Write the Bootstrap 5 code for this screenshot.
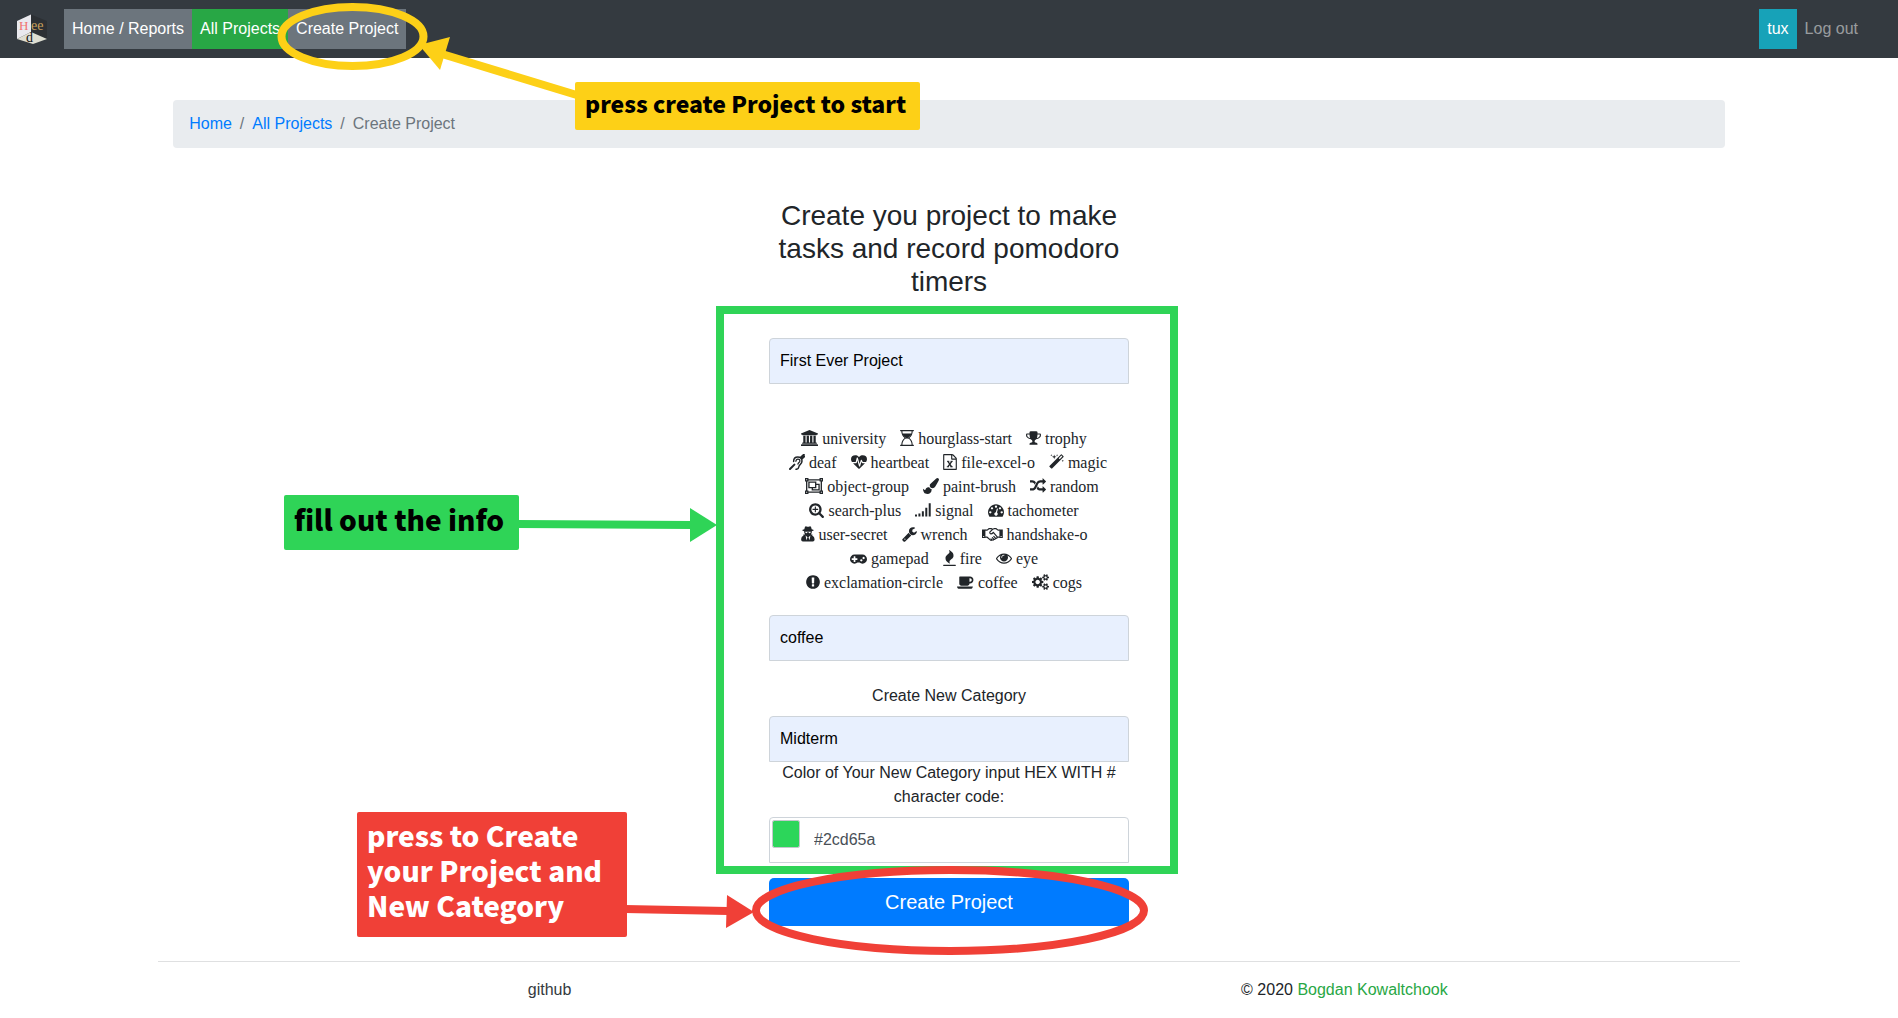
<!DOCTYPE html>
<html lang="en">
<head>
<meta charset="utf-8">
<meta name="viewport" content="width=device-width, initial-scale=1">
<title>Create Project</title>
<link href="https://cdn.jsdelivr.net/npm/bootstrap@5.3.0/dist/css/bootstrap.min.css" rel="stylesheet">
<style>
  body { font-family: "Liberation Sans", Arial, sans-serif; font-size: 16px; line-height: 24px; color: #212529; background: #fff; }
  a { text-decoration: none; }
  .topbar { background: #343a40; padding: 9px 16px; }
  .topbar .nav-link { color: #fff; padding: 8px; }
  .bg-slate { background: #6c757d; }
  .bg-leaf { background: #28a745; }
  .bg-teal { background: #17a2b8; }
  .topbar .link-muted { color: rgba(255,255,255,.5); }
  .logo { width: 32px; height: 32px; }
  .page-col { padding: 0 15px; }
  .crumbs { background: #e9ecef; border-radius: 4px; padding: 12px 16px; margin: 42px 0 51px; --bs-breadcrumb-divider-color: #6c757d; --bs-breadcrumb-item-active-color: #6c757d; }
  .crumbs a { color: #007bff; }
  .project-form { max-width: 360px; }
  .form-title { font-size: 28px; line-height: 33px; font-weight: 400; margin-bottom: 40px; }
  .field { height: 46px; padding: 10px; border: 1px solid #ced4da; border-radius: 4px 4px 0 0; color: #495057; }
  .field.filled, .field.filled:focus { background: #e8f0fe; color: #000; }
  .field-color { padding-left: 44px; }
  .swatch { width: 28px; height: 28px; top: 3px; left: 3px; padding: 0; border: 1px solid #c4c8cc; border-radius: 2px; background: none; }
  .swatch::-webkit-color-swatch-wrapper { padding: 0; }
  .swatch::-webkit-color-swatch { border: 0; border-radius: 1px; }
  .icon-names { font-family: "Liberation Serif", "Times New Roman", serif; margin: 43px 0 20px; white-space: nowrap; }
  .icon-names span { margin-right: 10px; }
  .icon-names svg { height: 16px; vertical-align: -2px; fill: currentColor; overflow: visible; }
  .cat-label { margin: 23px 0 8px; }
  .color-label { margin: -1px 0 8px; }
  .btn-create { background: #007bff; color: #fff; font-size: 20px; line-height: 30px; height: 48px; margin-top: 15px; border-radius: 5px; border: 0; }
  .btn-create:hover { background: #0069d9; color: #fff; }
  .foot-rule { border-top: 1px solid #dfe0e1; margin-top: 35px; padding-top: 16px; }
  .foot-link { color: #343a40; padding-right: 8px; }
  .foot-author { color: #28a745; }
  .marks { top: 0; left: 0; width: 100%; height: 100%; overflow: visible; pointer-events: none; z-index: 5; }
  .callout-note { font-family: "Noto Sans CJK SC", "Noto Sans", sans-serif; font-weight: 900; border-radius: 2px; padding: 0 10px; z-index: 6; white-space: nowrap; }
  .note-start { left: 575px; top: 82px; width: 345px; height: 48px; background: #fdd017; color: #000; font-size: 23px; line-height: 42px; }
  .note-info { left: -485px; top: 296px; width: 235px; height: 55px; background: #2fd457; color: #000; font-size: 28px; line-height: 48px; }
  .note-press { left: -412px; top: 613px; width: 270px; height: 125px; background: #f04037; color: #fff; font-size: 28px; line-height: 35px; padding-top: 6px; }
</style>
<script src="https://cdn.jsdelivr.net/npm/bootstrap@5.3.0/dist/js/bootstrap.bundle.min.js"></script>
</head>
<body class="position-relative">

<svg class="d-none" xmlns="http://www.w3.org/2000/svg">
  <symbol id="i-university" viewBox="0 0 1920 1792"><path d="M960 0l960 384v128h-128q0 26-20.500 45t-48.500 19h-1526q-28 0-48.500-19t-20.500-45h-128v-128zm-704 640h256v768h128v-768h256v768h128v-768h256v768h128v-768h256v768h59q28 0 48.500 19t20.500 45v64h-1664v-64q0-26 20.500-45t48.500-19h59v-768zm1595 960q28 0 48.500 19t20.500 45v128h-1920v-128q0-26 20.500-45t48.500-19h1782z"/></symbol>
  <symbol id="i-hourglass" viewBox="0 0 1536 1792"><path d="M1408 128q0 261-106.500 461.500t-266.500 306.500q160 106 266.500 306.500t106.500 461.500h96q14 0 23 9t9 23v64q0 14-9 23t-23 9h-1472q-14 0-23-9t-9-23v-64q0-14 9-23t23-9h96q0-261 106.500-461.500t266.500-306.500q-160-106-266.500-306.500t-106.500-461.500h-96q-14 0-23-9t-9-23v-64q0-14 9-23t23-9h1472q14 0 23 9t9 23v64q0 14-9 23t-23 9h-96zm-534 708q77-29 149-92.500t129.500-152.500 92.500-210 35-253h-1024q0 132 35 253t92.500 210 129.500 152.500 149 92.500q19 7 30.500 23.500t11.500 36.500-11.500 36.500-30.500 23.500q-77 29-149 92.500t-129.500 152.500-92.500 210-35 253h1024q0-132-35-253t-92.500-210-129.500-152.500-149-92.500q-19-7-30.500-23.500t-11.500-36.500 11.500-36.500 30.500-23.500z"/><path d="M260 400h1016q-90 380-400 450v100h-216v-100q-310-70-400-450z"/></symbol>
  <symbol id="i-trophy" viewBox="64 0 1664 1792"><path d="M521 883q-73-160-73-371h-256v96q0 78 94.500 162t234.500 113zm1079-275v-96h-256q0 211-73 371 140-29 234.500-113t94.500-162zm128-128v128q0 71-41.500 143t-112 130-173 97.500-215.500 44.500q-42 54-95 95-38 34-52.500 72.500t-14.500 89.500q0 54 30.500 91t97.500 37q75 0 133.500 45.500t58.500 114.500v64q0 14-9 23t-23 9h-832q-14 0-23-9t-9-23v-64q0-69 58.500-114.500t133.500-45.500q67 0 97.500-37t30.500-91q0-51-14.500-89.500t-52.500-72.500q-53-41-95-95-113-5-215.500-44.500t-173-97.500-112-130-41.500-143v-128q0-40 28-68t68-28h288v-96q0-66 47-113t113-47h576q66 0 113 47t47 113v96h288q40 0 68 28t28 68z"/></symbol>
  <symbol id="i-deaf" viewBox="0 0 16 16"><g fill="none" stroke="currentColor" stroke-linecap="round" stroke-width="1.500"><path d="M4.600 7.400C4.600 4.600 6.400 3 8.800 3s4.200 1.700 4.200 4c0 3.200-3 3.600-3.200 6-.2 1.500-1.100 2.300-2.800 2.300"/><path stroke-width="1.200" d="M6.900 7.300c.1-1.400 1-2.100 2-2.100 1.300 0 2 .8 2 1.800 0 1.400-1.800 1.600-2 3.100"/><path stroke-width="2" d="M1 15l4.400-4.400M11.800 3.600l3-2.800M13 4.400l2.200-2"/></g></symbol>
  <symbol id="i-heartbeat" viewBox="0 0 1792 1792"><path d="M1280 1024h305q-5 6-10 10.500t-9 7.500l-3 4-623 600q-18 18-44 18t-44-18l-624-602q-5-2-21-20h369q22 0 39.500-13.500t22.500-34.500l70-281 190 667q6 20 23 33t39 13q21 0 38-13t23-33l146-485 56 112q18 35 57 35zm512-428q0 145-103 300h-369l-111-221q-8-17-25.500-27t-36.500-8q-45 5-56 46l-129 430-196-686q-6-20-23.500-33t-39.500-13-39 13.500-22 34.500l-116 464h-423q-103-155-103-300 0-220 127-344t351-124q62 0 126.500 21.500t120 58 95.500 68.500 76 68q36-36 76-68t95.500-68.500 120-58 126.500-21.500q224 0 351 124t127 344z"/></symbol>
  <symbol id="i-excel" viewBox="128 0 1536 1792"><path d="M1596 380q28 28 48 76t20 88v1152q0 40-28 68t-68 28h-1344q-40 0-68-28t-28-68v-1600q0-40 28-68t68-28h896q40 0 88 20t76 48zm-444-244v376h376q-10-29-22-41l-313-313q-12-12-41-22zm384 1528v-1024h-416q-40 0-68-28t-28-68v-416h-768v1536h1280z"/><path fill="none" stroke="currentColor" stroke-width="110" d="M560 820h260M960 820h240M540 1430h230M920 1430h280"/><path fill="none" stroke="currentColor" stroke-width="150" d="M660 830l420 600M1100 830l-440 600"/></symbol>
  <symbol id="i-magic" viewBox="64 0 1664 1792"><path d="M1254 581l293-293-107-107-293 293zm447-293q0 27-18 45l-1286 1286q-18 18-45 18t-45-18l-198-198q-18-18-18-45t18-45l1286-1286q18-18 45-18t45 18l198 198q18 18 18 45zm-1351-190l98 30-98 30-30 98-30-98-98-30 98-30 30-98zm350 162l196 60-196 60-60 196-60-196-196-60 196-60 60-196zm930 478l98 30-98 30-30 98-30-98-98-30 98-30 30-98zm-640-640l98 30-98 30-30 98-30-98-98-30 98-30 30-98z"/></symbol>
  <symbol id="i-group" viewBox="0 0 2048 1792"><g fill="none" stroke="currentColor" stroke-width="150"><path d="M384 192h1280M384 1600h1280M192 384v1024M1856 384v1024M64 64h256v256h-256zM1728 64h256v256h-256zM64 1472h256v256h-256zM1728 1472h256v256h-256z"/><path d="M448 448h768v640h-768zM1216 704h384v640h-768v-256"/></g></symbol>
  <symbol id="i-brush" viewBox="0 0 1792 1792"><path d="M1615 0q70 0 122.500 46.500t52.500 116.500q0 63-45 151-332 629-465 752-97 91-218 91-126 0-216.500-92.500t-90.500-219.500q0-128 92-212l638-579q59-54 130-54zm-909 1034q39 76 106.500 130t150.500 76l1 71q4 213-129.500 347t-348.500 134q-123 0-218-46.500t-152.500-127.500-86.500-183-29-220q7 5 41 30t62 44.500 59 36.500 46 17q41 0 55-37 25-66 57.500-112.500t69.500-76 88-47.500 103-25.500 125-10.500z"/></symbol>
  <symbol id="i-random" viewBox="0 0 1792 1792"><path d="M666 481q-60 92-137 273-22-45-37-72.500t-40.500-63.500-51-56.500-63-35-81.500-14.500h-224q-14 0-23-9t-9-23v-192q0-14 9-23t23-9h224q250 0 410 225zm1126 799q0 14-9 23l-320 320q-9 9-23 9-13 0-22.500-9.500t-9.500-22.500v-192q-32 0-85 .5t-81 1-73-1-71-5-64-10.500-63-18.500-58-28.500-59-40-55-53.500-56-69.500q59-93 136-273 22 45 37 72.500t40.500 63.500 51 56.500 63 35 81.500 14.500h256v-192q0-14 9-23t23-9q12 0 24 10l319 319q9 9 9 23zm0-896q0 14-9 23l-320 320q-9 9-23 9-13 0-22.500-9.500t-9.500-22.500v-192h-256q-48 0-87 15t-69 45-51 61.500-45 77.500q-32 62-78 171-29 66-49.500 111t-54 105-64 100-74 83-90 68.500-106.500 42-128 16.500h-224q-14 0-23-9t-9-23v-192q0-14 9-23t23-9h224q48 0 87-15t69-45 51-61.500 45-77.500q32-62 78-171 29-66 49.500-111t54-105 64-100 74-83 90-68.500 106.500-42 128-16.500h256v-192q0-14 9-23t23-9q12 0 24 10l319 319q9 9 9 23z"/></symbol>
  <symbol id="i-searchplus" viewBox="64 0 1664 1792"><path d="M1088 800v64q0 13-9.500 22.500t-22.500 9.500h-224v224q0 13-9.500 22.500t-22.500 9.500h-64q-13 0-22.500-9.500t-9.500-22.500v-224h-224q-13 0-22.500-9.500t-9.500-22.500v-64q0-13 9.500-22.500t22.500-9.500h224v-224q0-13 9.500-22.500t22.500-9.500h64q13 0 22.500 9.500t9.500 22.500v224h224q13 0 22.500 9.500t9.500 22.500zm128 32q0-185-131.500-316.500t-316.500-131.500-316.500 131.500-131.500 316.500 131.500 316.500 316.500 131.500 316.500-131.500 131.500-316.500zm512 832q0 53-37.500 90.500t-90.500 37.500q-54 0-90-38l-343-342q-179 124-399 124-143 0-273.500-55.500t-225-150-150-225-55.500-273.500 55.500-273.500 150-225 225-150 273.500-55.500 273.500 55.500 225 150 150 225 55.500 273.500q0 220-124 399l343 343q37 37 37 90z"/></symbol>
  <symbol id="i-signal" viewBox="0 0 1792 1792"><path d="M0 1408h224v224h-224zM384 1280h224v352h-224zM768 1024h224v608h-224zM1152 640h224v992h-224zM1536 128h224v1504h-224z"/></symbol>
  <symbol id="i-tachometer" viewBox="0 0 1792 1792"><path d="M384 1152q0-53-37.500-90.500t-90.500-37.500-90.500 37.500-37.500 90.500 37.500 90.500 90.500 37.500 90.500-37.500 37.500-90.500zm192-448q0-53-37.500-90.500t-90.500-37.500-90.500 37.500-37.500 90.500 37.500 90.500 90.500 37.500 90.500-37.500 37.500-90.500zm428 481l101-382q6-26-7.500-48.500t-38.500-29.500-48 6.500-30 39.500l-101 382q-60 5-107 43.500t-63 98.500q-20 77 20 146t117 89 146-20 89-117q16-60-6-117t-72-91zm660-33q0-53-37.500-90.500t-90.500-37.500-90.500 37.500-37.500 90.500 37.500 90.500 90.500 37.500 90.500-37.500 37.500-90.500zm-640-640q0-53-37.500-90.500t-90.500-37.500-90.500 37.500-37.500 90.500 37.500 90.500 90.500 37.500 90.500-37.500 37.500-90.500zm448 192q0-53-37.500-90.500t-90.500-37.500-90.500 37.500-37.500 90.500 37.500 90.500 90.500 37.500 90.500-37.500 37.500-90.500zm320 448q0 261-141 483-19 29-54 29h-1402q-35 0-54-29-141-221-141-483 0-182 71-348t191-286 286-191 348-71 348 71 286 191 191 286 71 348z"/></symbol>
  <symbol id="i-secret" viewBox="0 0 14 16"><path fill-rule="evenodd" d="M4 .8Q4.700 0 5.500.4Q7 1 8.500.4Q9.300 0 10 .8L10.700 3.200Q12.800 3.700 12.800 4.300Q12.600 5 10.800 5.300Q11 6.500 10.300 7.700L10 8.400H11.500L11.200 9.400Q13.600 10.400 13.600 13.200Q13.600 15.400 11.800 15.400H1.900Q.1 15.400.1 13.200Q.1 10.400 2.500 9.400L2.300 8.400H4L3.700 7.700Q3 6.500 3.200 5.300Q1.400 5 1.200 4.300Q1.200 3.700 3.300 3.200ZM4.200 5.800Q4.300 7.300 5.400 7.200Q6.400 7 6.600 6.100H7.400Q7.600 7 8.600 7.200Q9.700 7.300 9.800 5.800ZM4.600 9.600L5.500 14.200L6.500 11.200ZM9.400 9.600L7.500 11.200L8.500 14.200Z"/></symbol>
  <symbol id="i-wrench" viewBox="64 0 1664 1792"><path d="M448 1472q0-26-19-45t-45-19-45 19-19 45 19 45 45 19 45-19 19-45zm644-420l-682 682q-37 37-90 37-52 0-91-37l-106-108q-38-36-38-90 0-53 38-91l681-681q39 98 114.500 173.500t173.500 114.500zm634-435q0 39-23 106-47 134-164.500 217.500t-258.500 83.500q-185 0-316.500-131.500t-131.500-316.500 131.500-316.500 316.500-131.500q58 0 121.500 16.500t107.500 46.500q16 11 16 28t-16 28l-293 169v224l193 107q5-3 79-48.500t135.500-81 70.500-35.500q15 0 23.500 10t8.500 25z"/></symbol>
  <symbol id="i-handshake" viewBox="0 0 21 16"><path d="M0 3.500h3.400v8.600H0zM17.400 3.500h3.400v8.600h-3.400z"/><g fill="none" stroke="currentColor" stroke-width="1.200" stroke-linejoin="round" stroke-linecap="round"><path d="M3.400 4.100H5.200L6.900 2.700H9.500L10.600 3.300L12 2.700H14.200L16 4.100H17.400M3.400 11.200H5.200L8.200 13.900Q9.200 14.700 10 13.800Q11.200 14.600 11.900 13.300Q13.200 13.700 13.600 12.400Q15.200 12.600 15.400 11.200H17.400M10.600 3.300L7.800 6.200Q7.500 7.600 8.800 7.900Q10 8 11.300 6.300L15.400 11.200M10 13.800L9 12.800M11.900 13.300L10.400 11.600M13.600 12.400L11.800 10.400"/></g><path fill="#fff" d="M1.200 10.100h1v1h-1zM18.600 10.100h1v1h-1z"/></symbol>
  <symbol id="i-gamepad" viewBox="0 0 1920 1792"><path d="M832 1088v-128q0-14-9-23t-23-9h-192v-192q0-14-9-23t-23-9h-128q-14 0-23 9t-9 23v192h-192q-14 0-23 9t-9 23v128q0 14 9 23t23 9h192v192q0 14 9 23t23 9h128q14 0 23-9t9-23v-192h192q14 0 23-9t9-23zm576 64q0-53-37.500-90.500t-90.500-37.500-90.500 37.500-37.500 90.500 37.500 90.500 90.500 37.500 90.500-37.500 37.500-90.500zm256-256q0-53-37.500-90.500t-90.500-37.500-90.500 37.500-37.500 90.500 37.500 90.500 90.500 37.500 90.500-37.500 37.500-90.500zm256 128q0 212-150 362t-362 150q-192 0-338-128h-220q-146 128-338 128-212 0-362-150t-150-362 150-362 362-150h896q212 0 362 150t150 362z"/></symbol>
  <symbol id="i-fire" viewBox="192 0 1408 1792"><path d="M1600 1696v64q0 13-9.500 22.500t-22.500 9.500h-1344q-13 0-22.500-9.500t-9.500-22.500v-64q0-13 9.500-22.500t22.500-9.500h1344q13 0 22.500 9.500t9.500 22.500zm-256-1056q0 78-24.500 144t-64 112.500-87.500 88-96 77.500-87.500 72-64 81.500-24.500 96.500q0 96 67 224l-4-1 1 1q-90-41-160-83t-138.500-100-113.500-122.500-72.500-150.500-27.500-184q0-78 24.500-144t64-112.500 87.500-88 96-77.500 87.500-72 64-81.500 24.500-96.500q0-94-66-224l3 1-1-1q90 41 160 83t138.500 100 113.500 122.500 72.500 150.500 27.500 184z"/></symbol>
  <symbol id="i-eye" viewBox="0 0 1792 1792"><path d="M1664 960q-152-236-381-353 61 104 61 225 0 185-131.500 316.500t-316.500 131.500-316.500-131.500-131.500-316.500q0-121 61-225-229 117-381 353 133 205 333.500 326.500t434.500 121.500 434.500-121.500 333.500-326.500zm-720-384q0-20-14-34t-34-14q-125 0-214.500 89.500t-89.500 214.500q0 20 14 34t34 14 34-14 14-34q0-86 61-147t147-61q20 0 34-14t14-34zm848 384q0 34-20 69-140 230-376.500 368.500t-499.500 138.500-499.500-139-376.500-368q-20-35-20-69t20-69q140-229 376.500-368t499.500-139 499.500 139 376.500 368q20 35 20 69z"/></symbol>
  <symbol id="i-exclaim" viewBox="128 0 1536 1792"><path d="M896 128q209 0 385.500 103t279.500 279.500 103 385.500-103 385.500-279.500 279.500-385.500 103-385.500-103-279.500-279.500-103-385.500 103-385.500 279.500-279.500 385.500-103zm128 1247v-190q0-14-9-23.500t-22-9.500h-192q-13 0-23 10t-10 23v190q0 13 10 23t23 10h192q13 0 22-9.500t9-23.500zm-2-344l18-621q0-12-10-18-10-8-24-8h-220q-14 0-24 8-10 6-10 18l17 621q0 10 10 17.500t24 7.500h185q14 0 23.500-7.500t10.500-17.500z"/></symbol>
  <symbol id="i-coffee" viewBox="0 128 1920 1792"><path d="M1664 800q0-80-56-136t-136-56h-64v384h64q80 0 136-56t56-136zm-1664 736h1792q0 106-75 181t-181 75h-1280q-106 0-181-75t-75-181zm1856-736q0 159-112.500 271.500t-271.500 112.500h-64v32q0 92-66 158t-158 66h-704q-92 0-158-66t-66-158v-736q0-26 19-45t45-19h1152q159 0 271.500 112.500t112.500 271.500z"/></symbol>
  <symbol id="i-cogs" viewBox="0 0 1920 1792"><path d="M896 896q0-106-75-181t-181-75-181 75-75 181 75 181 181 75 181-75 75-181zm768 512q0-52-38-90t-90-38-90 38-38 90q0 53 37.500 90.500t90.500 37.500 90.500-37.500 37.500-90.500zm0-1024q0-52-38-90t-90-38-90 38-38 90q0 53 37.500 90.500t90.500 37.500 90.500-37.500 37.500-90.500zm-384 421v185q0 10-7 19.500t-16 10.500l-155 24q-11 35-32 76 34 48 90 115 7 11 7 20 0 12-7 19-23 30-82.500 89.500t-78.500 59.500q-11 0-21-7l-115-90q-37 19-77 31-11 108-23 155-7 24-30 24h-186q-11 0-20-7.500t-10-17.500l-23-153q-34-10-75-31l-118 89q-7 7-20 7-11 0-21-8-144-133-144-160 0-9 7-19 10-14 41-53t47-61q-23-44-35-82l-152-24q-10-1-17-9.500t-7-19.500v-185q0-10 7-19.500t16-10.500l155-24q11-35 32-76-34-48-90-115-7-11-7-20 0-12 7-20 22-30 82-89t79-59q11 0 21 7l115 90q34-18 77-32 11-108 23-154 7-24 30-24h186q11 0 20 7.500t10 17.500l23 153q34 10 75 31l118-89q8-7 20-7 11 0 21 8 144 133 144 160 0 8-7 19-12 16-42 54t-45 60q23 48 34 82l152 23q10 2 17 10.500t7 19.500zm640 533v140q0 16-149 31-12 27-30 52 51 113 51 138 0 4-4 7-122 71-124 71-8 0-46-47t-52-68q-20 2-30 2t-30-2q-14 21-52 68t-46 47q-2 0-124-71-4-3-4-7 0-25 51-138-18-25-30-52-149-15-149-31v-140q0-16 149-31 13-29 30-52-51-113-51-138 0-4 4-7 4-2 35-20t59-34 30-16q8 0 46 46.500t52 67.500q20-2 30-2t30 2q51-71 92-112l6-2q4 0 124 70 4 3 4 7 0 25-51 138 17 23 30 52 149 15 149 31zm0-1024v140q0 16-149 31-12 27-30 52 51 113 51 138 0 4-4 7-122 71-124 71-8 0-46-47t-52-68q-20 2-30 2t-30-2q-14 21-52 68t-46 47q-2 0-124-71-4-3-4-7 0-25 51-138-18-25-30-52-149-15-149-31v-140q0-16 149-31 13-29 30-52-51-113-51-138 0-4 4-7 4-2 35-20t59-34 30-16q8 0 46 46.500t52 67.500q20-2 30-2t30 2q51-71 92-112l6-2q4 0 124 70 4 3 4 7 0 25-51 138 17 23 30 52 149 15 149 31z"/></symbol>
</svg>

<nav class="topbar d-flex align-items-center">
  <a class="d-flex me-3" href="#" aria-label="Heed">
    <svg class="logo" viewBox="0 0 32 32">
      <path fill="#e9e9ee" d="M1 8L15 1.500V19L1 26z"/>
      <path fill="#2c3034" d="M15 1.500L31 8V26L15 19z"/>
      <path fill="#deded2" d="M1 26L15 19L31 26L17 31z"/>
      <g font-family="Liberation Serif, serif">
        <text x="3" y="17" font-size="13" fill="#f0716f">H</text>
        <text x="15" y="17" font-size="14" fill="#c9a05c">ee</text>
        <text x="10" y="29" font-size="14" fill="#111">d</text>
      </g>
    </svg>
  </a>
  <div class="nav flex-grow-1">
    <a class="nav-link bg-slate" href="#">Home / Reports</a>
    <a class="nav-link bg-leaf" href="#">All Projects</a>
    <a class="nav-link bg-slate" href="#">Create Project</a>
  </div>
  <div class="nav me-3">
    <a class="nav-link bg-teal" href="#">tux</a>
    <a class="nav-link link-muted" href="#">Log out</a>
  </div>
</nav>

<svg class="marks position-absolute">
  <ellipse cx="352.500" cy="36.500" rx="71" ry="29.500" fill="none" stroke="#fdd017" stroke-width="8"/>
  <path d="M442 54L580 96" stroke="#fdd017" stroke-width="8"/>
  <path d="M419 45L450 37L440 70z" fill="#fdd017"/>
</svg>
<div class="callout-note note-start position-absolute">press create Project to start</div>

<div class="row g-0 justify-content-center">
  <main class="col-10">
    <div class="page-col">
      <nav aria-label="breadcrumb">
        <ol class="breadcrumb crumbs">
          <li class="breadcrumb-item"><a href="#">Home</a></li>
          <li class="breadcrumb-item"><a href="#">All Projects</a></li>
          <li class="breadcrumb-item active" aria-current="page">Create Project</li>
        </ol>
      </nav>

      <form class="project-form mx-auto text-center position-relative">
        <h1 class="form-title">Create you project to make tasks and record pomodoro timers</h1>
        <input class="form-control field filled" type="text" aria-label="Project name" value="First Ever Project">

        <div class="icon-names">
          <div>
            <span><svg width="17"><use href="#i-university"/></svg> university</span>
            <span><svg width="14"><use href="#i-hourglass"/></svg> hourglass-start</span>
            <span><svg width="15"><use href="#i-trophy"/></svg> trophy</span>
          </div>
          <div class="ps-2">
            <span><svg width="16"><use href="#i-deaf"/></svg> deaf</span>
            <span><svg width="16"><use href="#i-heartbeat"/></svg> heartbeat</span>
            <span><svg width="14"><use href="#i-excel"/></svg> file-excel-o</span>
            <span><svg width="15"><use href="#i-magic"/></svg> magic</span>
          </div>
          <div class="ps-3">
            <span><svg width="18"><use href="#i-group"/></svg> object-group</span>
            <span><svg width="16"><use href="#i-brush"/></svg> paint-brush</span>
            <span><svg width="16"><use href="#i-random"/></svg> random</span>
          </div>
          <div>
            <span><svg width="15"><use href="#i-searchplus"/></svg> search-plus</span>
            <span><svg width="16"><use href="#i-signal"/></svg> signal</span>
            <span><svg width="16"><use href="#i-tachometer"/></svg> tachometer</span>
          </div>
          <div>
            <span><svg width="14"><use href="#i-secret"/></svg> user-secret</span>
            <span><svg width="15"><use href="#i-wrench"/></svg> wrench</span>
            <span><svg width="21"><use href="#i-handshake"/></svg> handshake-o</span>
          </div>
          <div>
            <span><svg width="17"><use href="#i-gamepad"/></svg> gamepad</span>
            <span><svg width="13"><use href="#i-fire"/></svg> fire</span>
            <span><svg width="16"><use href="#i-eye"/></svg> eye</span>
          </div>
          <div>
            <span><svg width="14"><use href="#i-exclaim"/></svg> exclamation-circle</span>
            <span><svg width="17"><use href="#i-coffee"/></svg> coffee</span>
            <span><svg width="17"><use href="#i-cogs"/></svg> cogs</span>
          </div>
        </div>

        <input class="form-control field filled" type="text" aria-label="Project icon" value="coffee">

        <label class="cat-label d-block" for="category">Create New Category</label>
        <input class="form-control field filled" type="text" id="category" value="Midterm">

        <label class="color-label d-block" for="hex">Color of Your New Category input HEX WITH # character code:</label>
        <div class="position-relative">
          <input class="form-control field field-color" type="text" id="hex" value="#2cd65a">
          <input class="swatch position-absolute" type="color" aria-label="Pick a color" value="#2cd65a">
        </div>

        <button class="btn btn-create w-100" type="button">Create Project</button>

        <svg class="marks position-absolute">
          <rect x="-49" y="111" width="454" height="560" fill="none" stroke="#2fd457" stroke-width="8"/>
          <path d="M-252 325L-77 326" stroke="#2fd457" stroke-width="8"/>
          <path d="M-79 309L-52 326L-79 343z" fill="#2fd457"/>
          <ellipse cx="181" cy="711.500" rx="194" ry="40.500" fill="none" stroke="#f04037" stroke-width="8"/>
          <path d="M-144 710L-41 712" stroke="#f04037" stroke-width="8"/>
          <path d="M-42 696L-15 713L-43 729z" fill="#f04037"/>
        </svg>
        <div class="callout-note note-info position-absolute text-start">fill out the info</div>
        <div class="callout-note note-press position-absolute text-start">press to Create<br>your Project and<br>New Category</div>
      </form>
    </div>

    <footer class="foot-rule row g-0 text-center">
      <div class="col-6"><a class="foot-link" href="#">github</a></div>
      <div class="col-6">© 2020 <a class="foot-author" href="#">Bogdan Kowaltchook</a></div>
    </footer>
  </main>
</div>
</body>
</html>
